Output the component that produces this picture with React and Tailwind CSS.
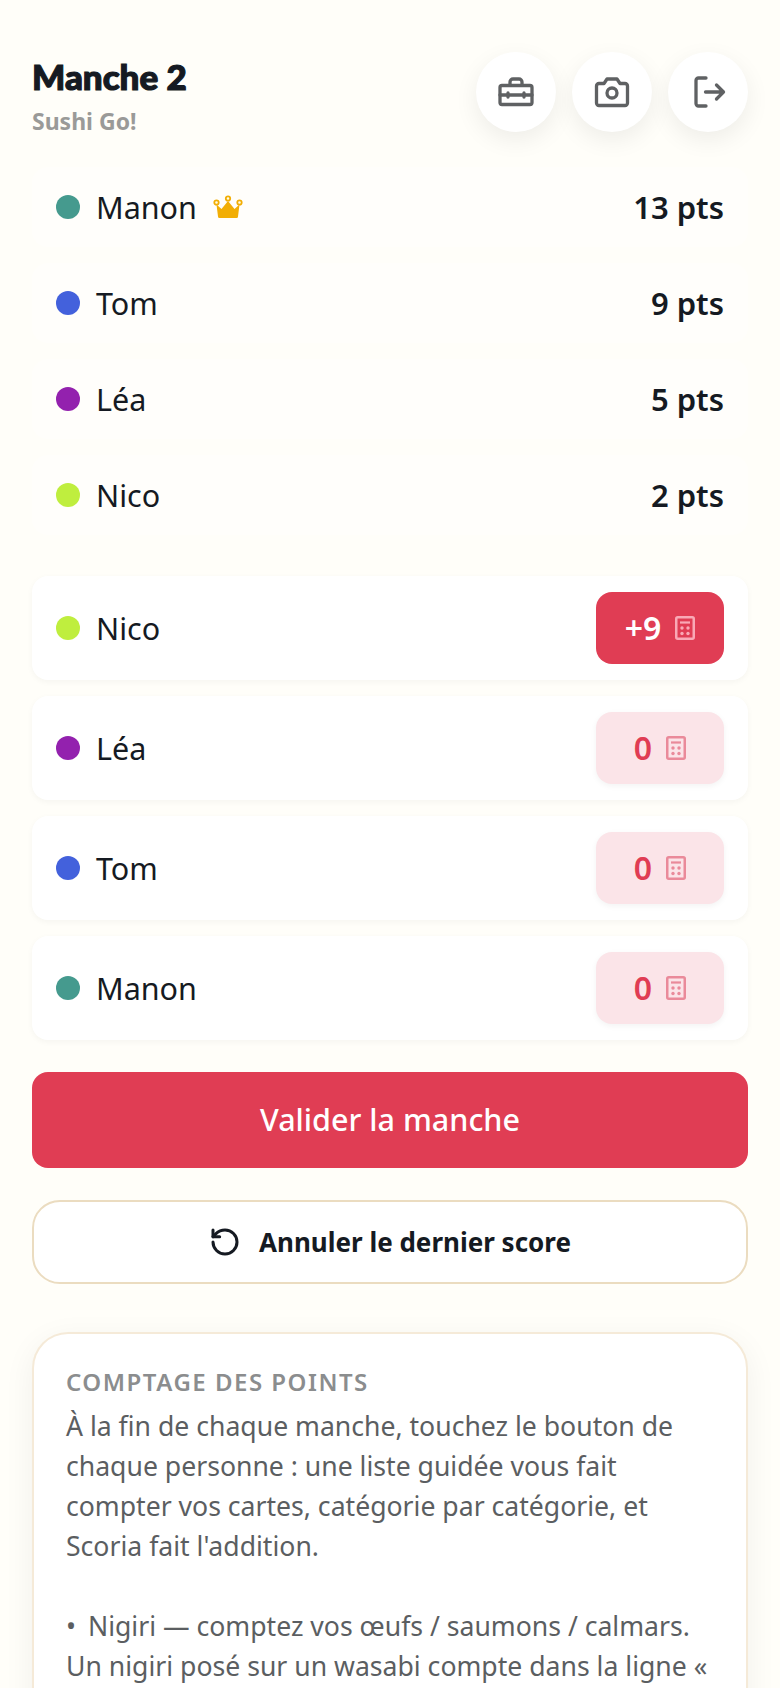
import React from 'react';
import { RotateCcw } from 'lucide-react';

const ranking = [
  { name: 'Manon', color: 'bg-[#459a8e]', pts: 13, crown: true },
  { name: 'Tom', color: 'bg-[#4361dc]', pts: 9 },
  { name: 'Léa', color: 'bg-[#9321ae]', pts: 5 },
  { name: 'Nico', color: 'bg-[#bfee3e]', pts: 2 },
];

const players = [
  { name: 'Nico', color: 'bg-[#bfee3e]', score: '+9', active: true },
  { name: 'Léa', color: 'bg-[#9321ae]', score: '0' },
  { name: 'Tom', color: 'bg-[#4361dc]', score: '0' },
  { name: 'Manon', color: 'bg-[#459a8e]', score: '0' },
];

const ToolboxIcon = () => (
  <svg width="40" height="40" viewBox="0 0 40 40" fill="none" stroke="currentColor" strokeWidth="3.3" strokeLinecap="round" strokeLinejoin="round">
    <rect x="4" y="13.5" width="32" height="19" rx="2" />
    <path d="M14 13V10a3 3 0 0 1 3-3h6a3 3 0 0 1 3 3v3" />
    <path d="M4 23H36" />
    <path d="M12 21v4M28 21v4" />
  </svg>
);

const CameraIcon = () => (
  <svg width="40" height="40" viewBox="0 0 40 40" fill="none" stroke="currentColor" strokeWidth="3.3" strokeLinejoin="round">
    <path d="M4.5 14a2.5 2.5 0 0 1 2.5-2.5h5l3-4.5h10l3 4.5h5a2.5 2.5 0 0 1 2.5 2.5v17a2.5 2.5 0 0 1-2.5 2.5H7A2.5 2.5 0 0 1 4.5 31Z" />
    <circle cx="20" cy="21" r="5" />
  </svg>
);

const ExitIcon = () => (
  <svg width="40" height="40" viewBox="0 0 40 40" fill="none" stroke="currentColor" strokeWidth="3.3" strokeLinecap="round" strokeLinejoin="round">
    <path d="M18 6H10.5A2.5 2.5 0 0 0 8 8.5v23a2.5 2.5 0 0 0 2.5 2.5H18" />
    <path d="M17.5 20H35.5M28.5 13l7 7-7 7" />
  </svg>
);

const CrownIcon = () => (
  <svg width="30" height="24" viewBox="0 0 30 24">
    <path d="M3.5 9.5 8.5 14 15 6l6.500 8 5-4.500L25 21.500a1.500 1.500 0 0 1-1.500 1.500h-17A1.500 1.500 0 0 1 5 21.500Z" fill="#f2ae05" />
    <circle cx="3.500" cy="7.500" r="2.200" fill="#fffde8" stroke="#f2ae05" strokeWidth="1.800" />
    <circle cx="15" cy="3.500" r="2.200" fill="#fffde8" stroke="#f2ae05" strokeWidth="1.800" />
    <circle cx="26.500" cy="7.500" r="2.200" fill="#fffde8" stroke="#f2ae05" strokeWidth="1.800" />
  </svg>
);

const CalcIcon = ({ className }) => (
  <svg width="20" height="24" viewBox="0 0 20 24" className={className}>
    <rect x="1.250" y="1.250" width="17.500" height="21.500" rx="1.500" fill="none" stroke="currentColor" strokeWidth="2.500" />
    <path d="M5 6.500H15" stroke="currentColor" strokeWidth="2.200" />
    <circle cx="7" cy="12" r="1.700" fill="currentColor" />
    <circle cx="13" cy="12" r="1.700" fill="currentColor" />
    <circle cx="7" cy="17.500" r="1.700" fill="currentColor" />
    <circle cx="13" cy="17.500" r="1.700" fill="currentColor" />
  </svg>
);

const RoundButton = ({ children }) => (
  <button className="flex h-20 w-20 items-center justify-center rounded-full bg-white text-[#5f6163] shadow-[0_8px_24px_rgba(0,0,0,0.07)]">
    {children}
  </button>
);

const App = () => {
  return (
    <div className="h-[1688px] overflow-hidden bg-[#fffef9] px-8 font-['Noto_Sans',sans-serif] text-[#151a22]">
      {/* Header */}
      <div className="flex h-[132px] items-start justify-between pt-[52px]">
        <div className="pt-[2px]">
          <h1 className="font-['Lato',sans-serif] text-[35px] leading-[44px] font-black [-webkit-text-stroke:1.2px_#151a22]">Manche 2</h1>
          <p className="mt-[9px] text-[23px] leading-[28px] font-bold text-[#9a9a98]">Sushi Go!</p>
        </div>
        <div className="flex gap-4">
          <RoundButton><ToolboxIcon /></RoundButton>
          <RoundButton><CameraIcon /></RoundButton>
          <RoundButton><ExitIcon /></RoundButton>
        </div>
      </div>

      {/* Ranking */}
      <div className="mt-[35px] flex flex-col gap-4">
        {ranking.map(r => (
          <div key={r.name} className="flex h-20 items-center justify-between rounded-2xl bg-[#fffefb] px-6">
            <div className="flex items-center gap-4">
              <span className={`h-6 w-6 rounded-full ${r.color}`} />
              <span className="text-[30.500px] leading-10">{r.name}</span>
              {r.crown && <CrownIcon />}
            </div>
            <span className="text-[31px] leading-10 font-semibold">{r.pts} pts</span>
          </div>
        ))}
      </div>

      {/* Players */}
      <div className="mt-[41px] flex flex-col gap-4">
        {players.map(p => (
          <div key={p.name} className="flex h-[104px] items-center justify-between rounded-2xl bg-white px-6 shadow-[0_2px_6px_rgba(0,0,0,0.04)]">
            <div className="flex items-center gap-4">
              <span className={`h-6 w-6 rounded-full ${p.color}`} />
              <span className="text-[30.500px] leading-10">{p.name}</span>
            </div>
            <button className={`flex h-[72px] w-[128px] items-center justify-center gap-[14px] rounded-2xl text-[32px] font-semibold ${p.active ? 'bg-[#e03d54] text-white' : 'bg-[#fbe4e8] text-[#e03d54] shadow-[0_2px_6px_rgba(0,0,0,0.05)]'}`}>
              {p.score}
              <CalcIcon className={p.active ? 'text-[#f9a9b6]' : 'text-[#ea8a9a]'} />
            </button>
          </div>
        ))}
      </div>

      <button className="mt-8 flex h-24 w-full items-center justify-center rounded-2xl bg-[#e03d54] text-[30.500px] font-medium text-white">
        Valider la manche
      </button>

      <button className="mt-8 flex h-[84px] w-full items-center justify-center gap-[18px] rounded-[28px] border-2 border-[#ebdcc0] bg-white text-[26px] font-bold">
        <RotateCcw size={32} strokeWidth={2.25} />
        Annuler le dernier score
      </button>

      {/* Help */}
      <div className="mt-[48px] rounded-t-[36px] border-2 border-b-0 border-[#f5ead8] bg-white px-8 pt-[32px] pb-10 shadow-[0_8px_32px_rgba(0,0,0,0.06)]">
        <h2 className="text-[24px] leading-[32px] font-semibold tracking-[1.500px] text-[#8b8d8e]">COMPTAGE DES POINTS</h2>
        <p className="mt-2 text-[26.600px] leading-[40px] text-[#5b5e61]">
          À la fin de chaque manche, touchez le bouton de chaque personne : une liste guidée vous fait compter vos cartes, catégorie par catégorie, et Scoria fait l'addition.
        </p>
        <p className="mt-10 text-[26.600px] leading-[40px] text-[#5b5e61]">
          <span className="pr-[5px]">•</span> Nigiri — comptez vos œufs / saumons / calmars. Un nigiri posé sur un wasabi compte dans la ligne «
        </p>
      </div>
    </div>
  );
};

export default App;
